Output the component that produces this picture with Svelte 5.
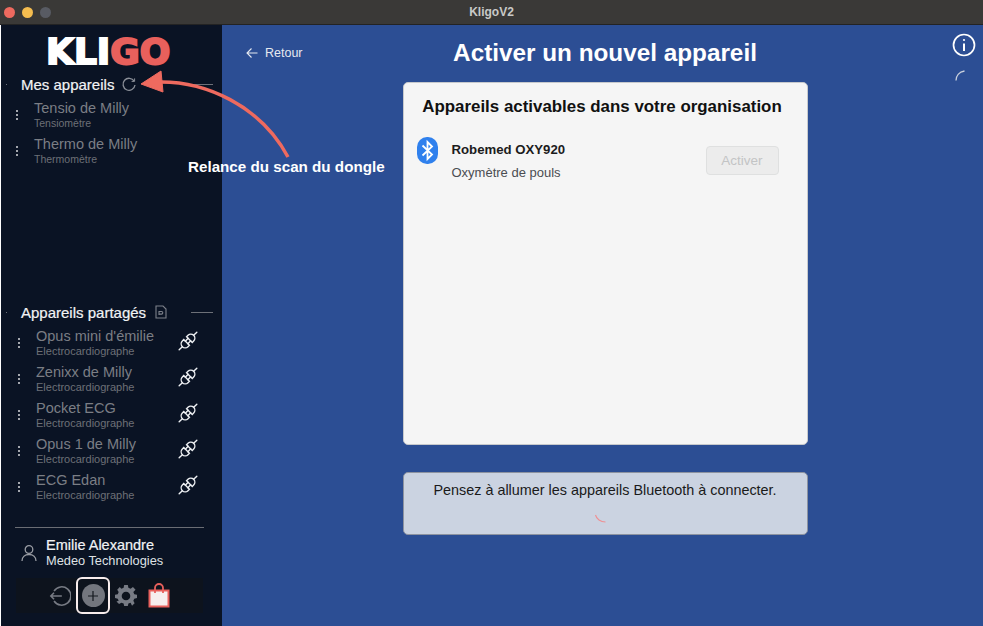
<script>
  const ownDevices = [
    { name: 'Tensio de Milly', type: 'Tensiomètre' },
    { name: 'Thermo de Milly', type: 'Thermomètre' },
  ];
  const sharedDevices = [
    { name: "Opus mini d'émilie", type: 'Electrocardiographe' },
    { name: 'Zenixx de Milly', type: 'Electrocardiographe' },
    { name: 'Pocket ECG', type: 'Electrocardiographe' },
    { name: 'Opus 1 de Milly', type: 'Electrocardiographe' },
    { name: 'ECG Edan', type: 'Electrocardiographe' },
  ];
</script>

<div class="window">
  <header class="titlebar">
    <div class="lights">
      <span class="light red"></span>
      <span class="light yellow"></span>
      <span class="light grey"></span>
    </div>
    <span class="window-title">KligoV2</span>
  </header>

  <div class="body">
    <aside class="sidebar">
      <div class="logo"><span class="logo-white">KLI</span><span class="logo-red">GO</span></div>

      <section class="own">
        <div class="section-head">
          <span class="section-title">Mes appareils</span>
          <svg class="refresh" width="16" height="16" viewBox="0 0 16 16" fill="none" stroke="#8b8f98" stroke-width="1.3">
            <path d="M13.2 5.2A6 6 0 1 0 14 9" />
            <path d="M13.6 2.4v3h-3" stroke-width="1" />
          </svg>
          <span class="dash"></span>
        </div>
        {#each ownDevices as d}
          <div class="device">
            <span class="kebab"><i></i><i></i><i></i></span>
            <div class="device-text">
              <div class="device-name">{d.name}</div>
              <div class="device-type">{d.type}</div>
            </div>
          </div>
        {/each}
      </section>

      <section class="shared">
        <div class="section-head">
          <span class="section-title">Appareils partagés</span>
          <svg class="doc" width="12" height="14" viewBox="0 0 12 14" fill="none" stroke="#7d818a" stroke-width="1.1">
            <path d="M1 1h7l3 3v9H1z" />
            <path d="M4 10V6.5h2.5a1.2 1.2 0 0 1 0 2.6H4" />
          </svg>
          <span class="dash"></span>
        </div>
        {#each sharedDevices as d}
          <div class="device">
            <span class="kebab"><i></i><i></i><i></i></span>
            <div class="device-text">
              <div class="device-name">{d.name}</div>
              <div class="device-type">{d.type}</div>
            </div>
            <svg class="plug" width="22" height="22" viewBox="0 0 22 22" fill="none" stroke="#eef0f3" stroke-width="1.4" stroke-linecap="round">
              <g transform="rotate(-45 11 11)">
                <path d="M-1.500 11H3M19 11h4.500" />
                <path d="M9 7v8H7a4 4 0 0 1-4-4 4 4 0 0 1 4-4z" />
                <path d="M13 7v8h2a4 4 0 0 0 4-4 4 4 0 0 0-4-4z" />
                <path d="M9 9.200h4M9 12.800h4" />
              </g>
            </svg>
          </div>
        {/each}
      </section>

      <div class="user">
        <svg width="16" height="18" viewBox="0 0 16 18" fill="none" stroke="#9a9da4" stroke-width="1.3">
          <circle cx="8" cy="5.500" r="3.800" />
          <path d="M1 17c0-4 3-6.500 7-6.500s7 2.500 7 6.500" />
        </svg>
        <div>
          <div class="user-name">Emilie Alexandre</div>
          <div class="user-org">Medeo Technologies</div>
        </div>
      </div>

      <div class="toolbar">
        <svg width="22" height="22" viewBox="0 0 24 24" fill="none" stroke="#777b84" stroke-width="1.700">
          <path d="M5.500 6.500a10 10 0 1 1 0 11" />
          <path d="M14 12H2M5.500 8.500L2 12l3.500 3.500" />
        </svg>
        <span class="add-btn">
          <span class="add-circle">
            <svg width="12" height="12" viewBox="0 0 12 12" stroke="#15181f" stroke-width="1.200"><path d="M6 1v10M1 6h10" /></svg>
          </span>
        </span>
        <svg width="22" height="22" viewBox="0 0 24 24" fill="#777b84">
          <path fill-rule="evenodd" d="M10 1h4l.6 3 2.400 1 2.600-1.700 2.800 2.800L20 8.700l1 2.400 3 .6v3.600l-3 .6-1 2.400 1.400 2.600-2.800 2.800L17 20.300l-2.400 1-.6 2.700h-4l-.6-2.700-2.400-1-2.600 1.400-2.800-2.800L4 18.300l-1-2.400-3-.6v-3.600l3-.6 1-2.400-1.600-2.600 2.800-2.800L7 5l2.400-1zM12 8.300a4.700 4.700 0 1 0 0 9.400 4.700 4.700 0 0 0 0-9.400z" transform="translate(0 -1)" />
        </svg>
        <svg class="bag" width="22" height="25" viewBox="0 0 22 25">
          <path d="M1.500 7.500h19v16h-19z" fill="#f6eeee" stroke="#e8605c" stroke-width="2" />
          <path d="M7 10V5a4 4 0 0 1 8 0v5" fill="none" stroke="#e8605c" stroke-width="1.800" />
        </svg>
      </div>
    </aside>

    <main class="main">
      <svg class="info" width="24" height="24" viewBox="0 0 24 24" fill="none" stroke="#fff" stroke-width="1.700">
        <circle cx="12" cy="12" r="10.500" />
        <path d="M12 10.500V18" stroke-width="2" />
        <circle cx="12" cy="7" r="1.100" fill="#fff" stroke="none" />
      </svg>
      <svg class="corner-spin" width="10" height="11" viewBox="0 0 10 11" fill="none" stroke="#c9d0dd" stroke-width="1.300">
        <path d="M1 10.500C1 6 4 2 9.500 1" />
      </svg>

      <div class="top">
        <button class="back">
          <svg width="12" height="12" viewBox="0 0 12 12" fill="none" stroke="#e6e9f0" stroke-width="1.100"><path d="M11.500 6H1M5.500 1.500L1 6l4.500 4.500" /></svg>
          Retour
        </button>
        <h1>Activer un nouvel appareil</h1>
      </div>

      <div class="card">
        <h2>Appareils activables dans votre organisation</h2>
        <div class="row">
          <svg class="bt" width="21" height="27" viewBox="0 0 21 27">
            <rect width="21" height="27" rx="10" fill="#2f80ed" />
            <path d="M5.500 8.500L15 17.500 10.500 22V5L15 9.500 5.500 18.500" fill="none" stroke="#fff" stroke-width="1.800" />
          </svg>
          <div class="row-text">
            <div class="row-name">Robemed OXY920</div>
            <div class="row-type">Oxymètre de pouls</div>
          </div>
          <button class="activate" disabled>Activer</button>
        </div>
      </div>

      <div class="hint">
        <p>Pensez à allumer les appareils Bluetooth à connecter.</p>
        <svg width="14" height="10" viewBox="0 0 14 10" fill="none" stroke="#ef8f93" stroke-width="1.100">
          <path d="M1.500 1c1 4 5 7 10 7" />
        </svg>
      </div>
    </main>
  </div>

  <!-- annotation drawn over the app -->
  <svg class="arrow" width="983" height="626" viewBox="0 0 983 626" fill="none">
    <path d="M158 82C205 81 260 105 288 157" stroke="#ee6a5f" stroke-width="3.500" />
    <path d="M141 84L161 71 163 92z" fill="#ee6a5f" stroke="#ee6a5f" stroke-width="1" />
  </svg>
  <span class="annotation">Relance du scan du dongle</span>
</div>

<style>
  :global(body) {
    margin: 0;
    background: #fff;
  }

  .window {
    position: relative;
    width: 983px;
    height: 626px;
    overflow: hidden;
    display: flex;
    flex-direction: column;
    font-family: "Liberation Sans", Arial, sans-serif;
  }

  .titlebar {
    height: 25px;
    flex: none;
    display: flex;
    align-items: center;
    justify-content: center;
    background: #3a3937;
    border-bottom: 1px solid #232323;
    box-sizing: border-box;
    position: relative;
  }

  .lights {
    position: absolute;
    left: 4px;
    top: 7px;
    display: flex;
    gap: 7px;
  }

  .light {
    width: 11px;
    height: 11px;
    border-radius: 50%;
  }

  .red { background: #ee6a5f; }
  .yellow { background: #f5bd4f; }
  .grey { background: #585b63; }

  .window-title {
    color: #c9c9c7;
    font-size: 12px;
    font-weight: bold;
  }

  .body {
    flex: 1;
    display: flex;
    min-height: 0;
  }

  .sidebar {
    width: 221px;
    margin-left: 1px;
    flex: none;
    background: #0a1324;
    display: flex;
    flex-direction: column;
    color: #fff;
  }

  .logo {
    margin: 10px 0 0 45px;
    height: 33px;
    font-family: "DejaVu Sans", sans-serif;
    font-weight: bold;
    font-size: 36px;
    line-height: 33px;
    -webkit-text-stroke: 2px currentColor;
    white-space: nowrap;
  }

  .logo-white { color: #fff; }
  .logo-red { color: #e8605c; }

  .section-head {
    position: relative;
    display: flex;
    align-items: center;
    height: 20px;
    padding-left: 20px;
    margin-bottom: 3px;
  }

  /* the tiny dot left of each section title */
  .section-head::before {
    content: '';
    position: absolute;
    left: 5px;
    top: 10px;
    width: 1px;
    height: 1px;
    background: #6d7078;
  }

  .section-title {
    font-size: 15px;
    color: #f2f3f5;
    -webkit-text-stroke: 0.2px currentColor;
  }

  .own {
    margin-top: 6px;
    height: 228px;
  }

  .own .section-head .refresh { margin-left: 7px; }

  .dash {
    height: 1px;
    width: 22px;
    background: #6d7078;
    margin-left: auto;
    margin-right: 9px;
  }

  .own .device { padding-left: 15px; }
  .own .device-text { margin-left: 15px; }

  .device {
    display: flex;
    align-items: center;
    height: 36px;
    padding-left: 17px;
    padding-right: 23px;
  }

  .kebab {
    display: flex;
    flex-direction: column;
    gap: 2px;
    width: 3px;
  }

  .kebab i {
    width: 2px;
    height: 2px;
    background: #d9dadd;
    border-radius: 50%;
  }

  .device-text {
    margin-left: 15px;
    flex: 1;
    min-width: 0;
  }

  .device-name {
    font-size: 14.500px;
    line-height: 17px;
    color: #7b7e85;
  }

  .device-type {
    font-size: 10.500px;
    line-height: 13px;
    color: #6d7077;
  }

  .shared {
    height: 225px;
  }

  .shared .doc { margin-left: 9px; }

  .shared .device-type { font-size: 11px; }

  .plug {
    flex: none;
    position: relative;
    top: -2px;
  }

  .user {
    margin: 0 18px 0 14px;
    border-top: 1px solid #6a6d74;
    display: flex;
    align-items: center;
    gap: 9px;
    padding: 7px 0 0 6px;
    height: 35px;
  }

  .user-name {
    font-size: 14.500px;
    line-height: 16px;
    color: #f2f3f5;
    -webkit-text-stroke: 0.2px currentColor;
  }

  .user-org {
    font-size: 12.800px;
    line-height: 15px;
    color: #dfe1e4;
  }

  .toolbar {
    margin: 8px 19px 0 15px;
    height: 35px;
    background: #0d131d;
    display: flex;
    align-items: center;
    justify-content: center;
    gap: 5px;
  }

  .bag { margin-left: 6px; }

  .add-btn {
    flex: none;
    width: 30px;
    height: 33px;
    border: 2px solid #f7ecec;
    border-radius: 6px;
    display: flex;
    align-items: center;
    justify-content: center;
  }

  .add-circle {
    width: 23px;
    height: 23px;
    border-radius: 50%;
    background: #73767e;
    display: flex;
    align-items: center;
    justify-content: center;
  }

  .main {
    flex: 1;
    position: relative;
    background: #2c4e94;
    display: flex;
    flex-direction: column;
    align-items: center;
    padding-left: 5px;
  }

  .info {
    position: absolute;
    right: 7px;
    top: 8px;
  }

  .corner-spin {
    position: absolute;
    right: 18px;
    top: 45px;
  }

  .top {
    width: 100%;
    height: 57px;
    position: relative;
    display: flex;
    justify-content: center;
    align-items: center;
    flex: none;
  }

  .back {
    position: absolute;
    left: 19px;
    top: 21px;
    padding: 0;
    border: none;
    background: none;
    color: #e6e9f0;
    font: 12.500px "Liberation Sans", Arial, sans-serif;
    display: flex;
    align-items: center;
    gap: 7px;
  }

  h1 {
    margin: 0;
    color: #fff;
    font-size: 24.300px;
    font-weight: bold;
    position: relative;
    top: -1px;
  }

  .card {
    width: 405px;
    height: 363px;
    box-sizing: border-box;
    background: #f5f5f5;
    border: 1px solid #c7c9cc;
    border-radius: 5px;
    padding: 14px 13px;
  }

  h2 {
    margin: 0;
    padding-right: 6px;
    font-size: 16.900px;
    line-height: 20px;
    font-weight: bold;
    text-align: center;
    white-space: nowrap;
    color: #111;
  }

  .row {
    display: flex;
    align-items: flex-start;
    margin-top: 9px;
    padding-top: 11px;
  }

  .bt { flex: none; }

  .row-text {
    margin-left: 14px;
    margin-top: 5px;
    flex: 1;
  }

  .row-name {
    font-size: 13.200px;
    line-height: 16px;
    font-weight: bold;
    color: #1c1c1c;
  }

  .row-type {
    margin-top: 7px;
    font-size: 13px;
    line-height: 15px;
    color: #4b4d52;
  }

  .activate {
    width: 73px;
    height: 29px;
    margin-top: 9px;
    margin-right: 15px;
    border: 1px solid #dfe0e0;
    border-radius: 4px;
    background: #ececec;
    color: #c3c4c5;
    font: 13.500px "Liberation Sans", Arial, sans-serif;
  }

  .hint {
    margin-top: 27px;
    width: 405px;
    height: 63px;
    box-sizing: border-box;
    background: #cbd3e1;
    border: 1px solid #8d93a0;
    border-radius: 5px;
    display: flex;
    flex-direction: column;
    align-items: center;
  }

  .hint p {
    margin: 9px 0 0;
    font-size: 14.400px;
    line-height: 17px;
    color: #1a1a1a;
  }

  .hint svg {
    margin-top: 15px;
    margin-left: -8px;
  }

  .arrow {
    position: absolute;
    left: 0;
    top: 0;
    pointer-events: none;
  }

  .annotation {
    position: absolute;
    left: 188px;
    top: 158px;
    color: #fff;
    font-size: 15.200px;
    line-height: 17px;
    font-weight: bold;
  }
</style>
